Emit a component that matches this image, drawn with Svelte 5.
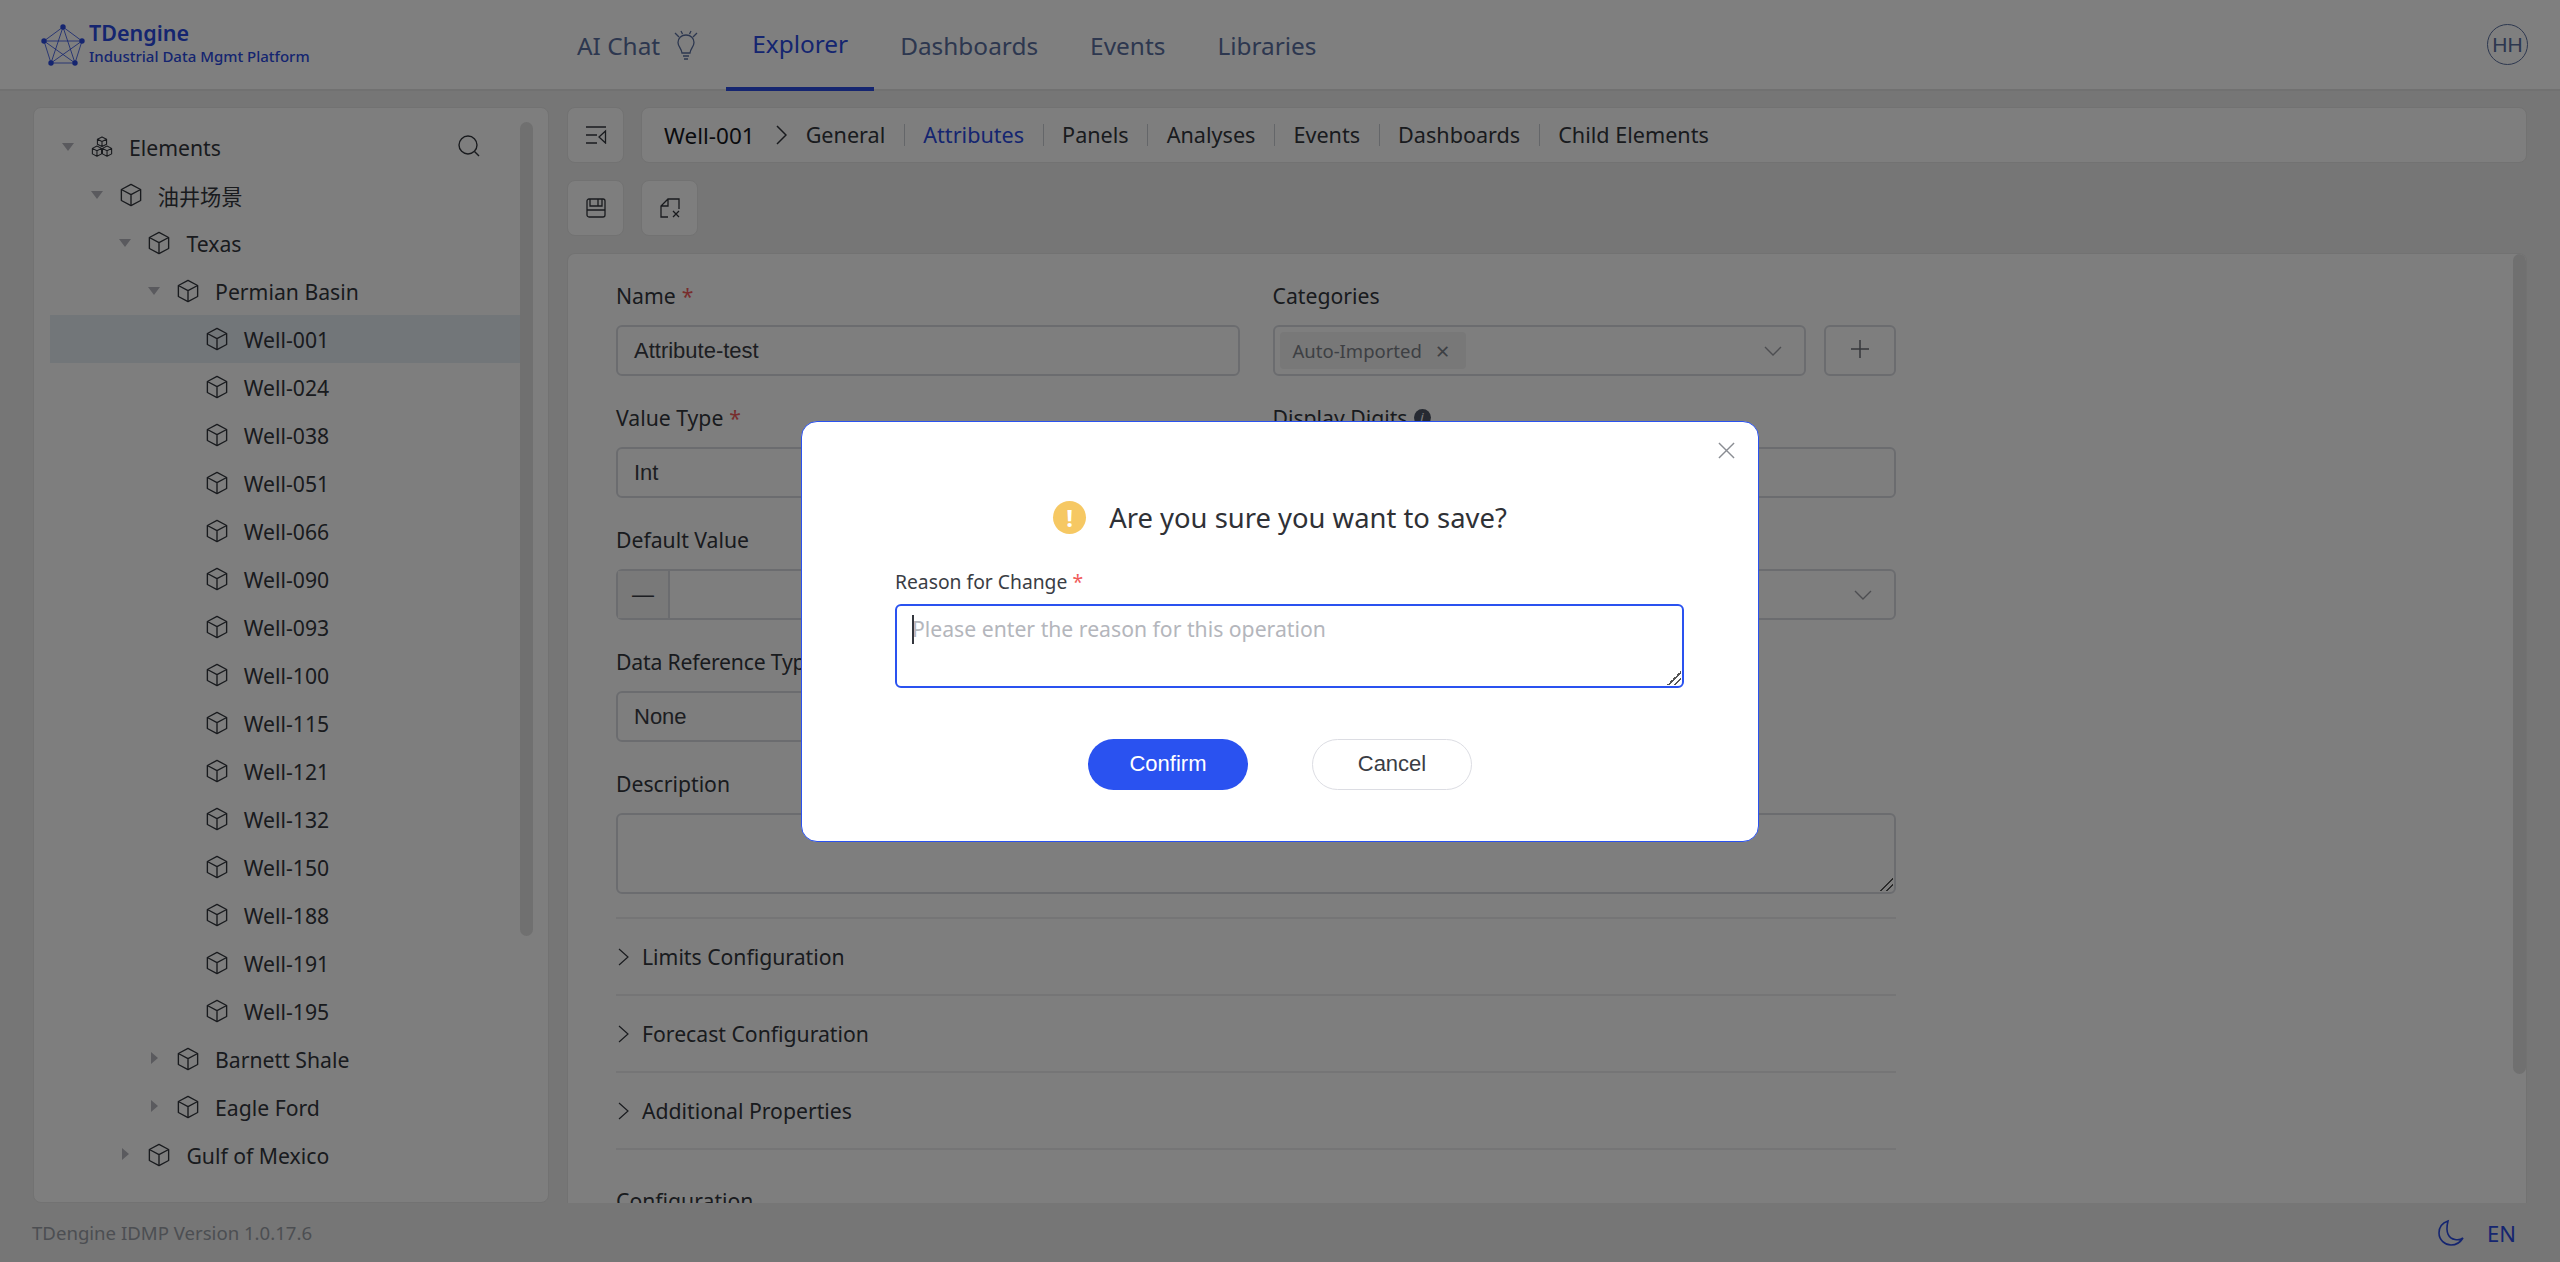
<script>
  const navItems = [
    { label: "AI Chat", bulb: true },
    { label: "Explorer", active: true },
    { label: "Dashboards" },
    { label: "Events" },
    { label: "Libraries" },
  ];

  const tabs = ["General", "Attributes", "Panels", "Analyses", "Events", "Dashboards", "Child Elements"];

  const wells = ["001", "024", "038", "051", "066", "090", "093", "100", "115", "121", "132", "150", "188", "191", "195"];

  const tree = [
    { name: "油井场景", level: 1, caret: "down" },
    { name: "Texas", level: 2, caret: "down" },
    { name: "Permian Basin", level: 3, caret: "down" },
    ...wells.map((w) => ({ name: `Well-${w}`, level: 4, selected: w === "001" })),
    { name: "Barnett Shale", level: 3, caret: "right" },
    { name: "Eagle Ford", level: 3, caret: "right" },
    { name: "Gulf of Mexico", level: 2, caret: "right" },
  ];

  const sections = ["Limits Configuration", "Forecast Configuration", "Additional Properties"];
</script>

{#snippet cube()}
  <svg class="cube" viewBox="0 0 24 26" fill="none" stroke="currentColor" stroke-width="1.5" stroke-linejoin="round">
    <path d="M12 1.5 22.5 7v12L12 24.5 1.5 19V7z" />
    <path d="M1.5 7 12 12.5 22.5 7M12 12.5v12" />
  </svg>
{/snippet}

{#snippet chevDown()}
  <svg class="chev" viewBox="0 0 18 10" fill="none" stroke="currentColor" stroke-width="1.4"><path d="M1 1l8 8 8-8" /></svg>
{/snippet}

<div class="page">
  <header>
    <div class="logo">
      <svg width="46" height="44" viewBox="0 0 46 44" fill="none" stroke="#2a4ae0" stroke-width="0.8">
        <path d="M23 4 42 18 35 40H11L4 18z" />
        <path d="M23 4 35 40 4 18H42L11 40z" />
        <g fill="#2a4ae0" stroke="none">
          <circle cx="23" cy="4" r="2.7" /><circle cx="42" cy="18" r="2.7" /><circle cx="35" cy="40" r="2.7" />
          <circle cx="11" cy="40" r="2.7" /><circle cx="4" cy="18" r="2.7" />
        </g>
      </svg>
      <div class="logo-text">
        <span class="brand">TDengine</span>
        <span class="sub">Industrial Data Mgmt Platform</span>
      </div>
    </div>
    <nav>
      {#each navItems as item}
        <a class:active={item.active} class:bulb={item.bulb}>
          {item.label}
          {#if item.bulb}
            <svg width="28" height="32" viewBox="0 0 28 32" fill="none" stroke="currentColor" stroke-width="1.3">
              <path d="M14 5c-5 0-8 3.500-8 7.500 0 4 3.500 6 4 10.500h8c.5-4.500 4-6.500 4-10.500C22 8.500 19 5 14 5z" />
              <path d="M11 26h6M12 29h4M3 3l4 4M25 3l-4 4M9 1l1.500 3M19 1l-1.500 3" />
            </svg>
          {/if}
        </a>
      {/each}
    </nav>
    <div class="avatar">HH</div>
  </header>

  <div class="body">
    <aside class="panel">
      <div class="tree-row root">
        <span class="caret down"></span>
        <svg class="cube" viewBox="0 0 24 24" fill="none" stroke="currentColor" stroke-width="1.2" stroke-linejoin="round">
          <path d="M12 1 17 3.500V9L12 11.500 7 9V3.500zM7 3.500l5 2.500 5-2.500M12 6v5.500" />
          <path d="M6.500 11 11.500 13.500V19.500L6.500 22 1.500 19.500V13.500zM1.500 13.500l5 2.500 5-2.500M6.500 16v6" />
          <path d="M17.500 11 22.500 13.500V19.500L17.500 22 12.500 19.500V13.500zM12.500 13.500l5 2.500 5-2.500M17.500 16v6" />
        </svg>
        <span class="tree-label">Elements</span>
        <svg class="search" width="24" height="24" viewBox="0 0 24 24" fill="none" stroke="currentColor" stroke-width="1.4">
          <circle cx="11" cy="11" r="9" /><path d="M17.500 17.500 22 22" />
        </svg>
      </div>
      {#each tree as node}
        <div class="tree-row" class:selected={node.selected} style="padding-left: {node.level * 28.7}px">
          {#if node.caret}
            <span class="caret {node.caret}"></span>
          {:else}
            <span class="caret none"></span>
          {/if}
          {@render cube()}
          <span class="tree-label">{node.name}</span>
        </div>
      {/each}
      <div class="thumb side"></div>
    </aside>

    <section class="content">
      <div class="topline">
        <button class="square">
          <svg width="22" height="18" viewBox="0 0 22 18" fill="none" stroke="currentColor" stroke-width="1.3">
            <path d="M1 1h20M1 9h11M1 17h11M20.500 5 14 11l6.500 6z" />
          </svg>
        </button>
        <div class="crumbs">
          <span class="well">Well-001</span>
          <svg class="crumb-chev" width="11" height="20" viewBox="0 0 11 20" fill="none" stroke="currentColor" stroke-width="1.5"><path d="M1 1l9 9-9 9" /></svg>
          {#each tabs as tab, i}
            <span class="tab" class:current={tab === "Attributes"} class:last={i === tabs.length - 1}>{tab}</span>
          {/each}
        </div>
      </div>
      <div class="actions">
        <button class="square">
          <svg width="20" height="20" viewBox="0 0 20 20" fill="none" stroke="currentColor" stroke-width="1.3">
            <rect x="1" y="1" width="18" height="18" rx="2" /><path d="M4 1v7h12V1M1 12h18M12 1v7" />
          </svg>
        </button>
        <button class="square">
          <svg width="20" height="20" viewBox="0 0 20 20" fill="none" stroke="currentColor" stroke-width="1.3">
            <path d="M8 19H1V8l7-7h11v10M1 8h7V1M13 13l6 6M19 13l-6 6" />
          </svg>
        </button>
      </div>

      <div class="form-panel">
        <div class="form">
          <div class="grid">
            <div class="field">
              <label>Name <i>*</i></label>
              <div class="input">Attribute-test</div>
            </div>
            <div class="field">
              <label>Categories</label>
              <div class="with-add">
                <div class="input select">
                  <span class="tag">Auto-Imported <b>×</b></span>
                  {@render chevDown()}
                </div>
                <button class="add">
                  <svg width="18" height="18" viewBox="0 0 18 18" stroke="currentColor" stroke-width="1.5"><path d="M9 0v18M0 9h18" /></svg>
                </button>
              </div>
            </div>
            <div class="field">
              <label>Value Type <i>*</i></label>
              <div class="input select">Int {@render chevDown()}</div>
            </div>
            <div class="field">
              <label>Display Digits <span class="info">i</span></label>
              <div class="input"></div>
            </div>
            <div class="field">
              <label>Default Value</label>
              <div class="input split"><span class="minus">—</span></div>
            </div>
            <div class="field">
              <label></label>
              <div class="input select">{@render chevDown()}</div>
            </div>
            <div class="field wide">
              <label class="tight">Data Reference Type</label>
              <div class="half"><div class="input select">None {@render chevDown()}</div></div>
            </div>
            <div class="field wide">
              <label>Description</label>
              <div class="input area"><span class="grip small"></span></div>
            </div>
          </div>
          {#each sections as s}
            <div class="section">
              <svg width="11" height="20" viewBox="0 0 11 20" fill="none" stroke="currentColor" stroke-width="1.2"><path d="M1 2l9 8-9 8" /></svg>
              {s}
            </div>
          {/each}
          <div class="config">Configuration</div>
        </div>
        <div class="thumb main"></div>
      </div>
    </section>
  </div>

  <footer>
    <span class="version">TDengine IDMP Version 1.0.17.6</span>
    <div class="foot-right">
      <svg width="28" height="28" viewBox="0 0 28 28" fill="none" stroke="#2a4ae0" stroke-width="1.6">
        <path d="M11 2C5 4 2 9 2 14c0 7 6 12 12 12 5 0 9-2 12-7-2 1.500-5 2-8 1.500C12 19.500 8 14 11 2z" />
      </svg>
      <span class="lang">EN</span>
    </div>
  </footer>

  <div class="overlay">
    <div class="modal">
      <svg class="close" width="17" height="17" viewBox="0 0 18 18" fill="none" stroke="currentColor" stroke-width="1.5"><path d="M1 1l16 16M17 1 1 17" /></svg>
      <div class="title">
        <span class="warn">!</span>
        Are you sure you want to save?
      </div>
      <div class="reason">
        <div class="reason-label">Reason for Change <i>*</i></div>
        <div class="reason-box">
          <span class="cursor"></span>
          <span class="placeholder">Please enter the reason for this operation</span>
          <span class="grip"></span>
        </div>
      </div>
      <div class="buttons">
        <button class="confirm">Confirm</button>
        <button class="cancel">Cancel</button>
      </div>
    </div>
  </div>
</div>

<style>
  :global(body) {
    margin: 0;
    font-family: "Noto Sans", "Noto Sans CJK SC", sans-serif;
    color: #33363d;
  }
  button {
    font-family: inherit;
    color: inherit;
  }
  .page {
    width: 2560px;
    height: 1262px;
    display: flex;
    flex-direction: column;
    background: #ececec;
    overflow: hidden;
    position: relative;
  }

  header {
    height: 89px;
    flex: none;
    display: flex;
    align-items: center;
    background: #fff;
    border-bottom: 2px solid #e2e2e2;
    box-sizing: content-box;
    padding: 0 32px 0 40px;
  }
  .logo {
    display: flex;
    align-items: center;
    gap: 3px;
    width: 537px;
    flex: none;
  }
  .logo-text {
    display: flex;
    flex-direction: column;
    color: #2a4ae0;
  }
  .brand {
    font-size: 21.5px;
    font-weight: 600;
    line-height: 24px;
    margin-top: -2px;
  }
  .sub {
    font-size: 15px;
    font-weight: 500;
    line-height: 22px;
  }
  nav {
    display: flex;
    height: 89px;
    flex: 1;
  }
  nav a {
    display: flex;
    align-items: center;
    gap: 12px;
    padding: 0 26px;
    font-size: 24.4px;
    color: #5a6f9f;
    box-sizing: border-box;
    height: 91px;
  }
  nav a.bulb {
    padding: 0 26px 0 0;
  }
  nav a.active {
    color: #2a4ae0;
    border-bottom: 4px solid #2a4ae0;
  }
  .avatar {
    width: 41px;
    height: 41px;
    border: 1px solid #5a6f9f;
    border-radius: 50%;
    box-sizing: border-box;
    display: flex;
    align-items: center;
    justify-content: center;
    font-family: "Liberation Sans", sans-serif;
    font-size: 21px;
    color: #5a6f9f;
  }

  .body {
    flex: 1;
    display: flex;
    gap: 18px;
    padding: 16px 33px 0;
    min-height: 0;
  }
  .panel {
    width: 516px;
    flex: none;
    background: #fdfdfd;
    border: 1px solid #e4e4e4;
    border-radius: 8px;
    box-sizing: border-box;
    padding: 15px 16px 0;
    position: relative;
    overflow: hidden;
  }
  .tree-row {
    height: 48px;
    display: flex;
    align-items: center;
    font-size: 21.2px;
    box-sizing: border-box;
    width: 472px;
  }
  .tree-row.root {
    padding-left: 0;
  }
  .tree-row.selected {
    background: #e5ecf3;
  }
  .caret {
    width: 41px;
    flex: none;
    position: relative;
    height: 14px;
  }
  .caret.down::before {
    content: "";
    position: absolute;
    left: 12px;
    top: 3px;
    border-left: 6px solid transparent;
    border-right: 6px solid transparent;
    border-top: 8px solid #b4b4bc;
  }
  .caret.right::before {
    content: "";
    position: absolute;
    left: 15px;
    top: 0;
    border-top: 6.500px solid transparent;
    border-bottom: 6.500px solid transparent;
    border-left: 7px solid #b4b4bc;
  }
  .cube {
    width: 22px;
    height: 24px;
    flex: none;
    margin: 0 16px 0 0;
  }
  .search {
    margin-left: auto;
    margin-right: 41px;
    margin-top: -2px;
  }
  .thumb {
    position: absolute;
    background: #e0e0e0;
    border-radius: 7px;
    width: 13px;
  }
  .thumb.side {
    right: 15px;
    top: 14px;
    height: 814px;
  }

  .content {
    flex: 1;
    min-width: 0;
    display: flex;
    flex-direction: column;
  }
  .topline {
    display: flex;
    gap: 17px;
    height: 56px;
  }
  .actions {
    display: flex;
    gap: 17px;
    height: 56px;
    margin: 17px 0;
  }
  .square {
    width: 57px;
    height: 56px;
    background: #fdfdfd;
    border: 1px solid #e4e4e4;
    border-radius: 8px;
    padding: 0;
    display: flex;
    align-items: center;
    justify-content: center;
    box-sizing: border-box;
  }
  .crumbs {
    flex: 1;
    background: #fdfdfd;
    border: 1px solid #e4e4e4;
    border-radius: 8px;
    display: flex;
    align-items: center;
    padding-left: 22px;
    font-size: 21.6px;
  }
  .well {
    color: #14161c;
    font-size: 22.5px;
  }
  .crumb-chev {
    margin: 0 19px 0 21px;
  }
  .tab {
    padding: 0 18.5px 0 0;
    margin-right: 18.5px;
    border-right: 1px solid #c9ccd3;
    line-height: 22px;
  }
  .tab.last {
    border: 0;
  }
  .tab.current {
    color: #2a4ae0;
  }

  .form-panel {
    flex: 1;
    background: #fdfdfd;
    border: 1px solid #e4e4e4;
    border-bottom: 0;
    border-radius: 8px 8px 0 0;
    position: relative;
    overflow: hidden;
    min-height: 0;
    box-sizing: border-box;
  }
  .thumb.main {
    right: 0;
    top: 0;
    height: 820px;
  }
  .form {
    width: 1280px;
    margin-left: 48px;
    padding-top: 24px;
    font-size: 21.2px;
  }
  .grid {
    display: grid;
    grid-template-columns: 1fr 1fr;
    column-gap: 33px;
  }
  .field {
    height: 122px;
  }
  .field.wide {
    grid-column: span 2;
  }
  .field.wide:last-child {
    height: 151px;
  }
  .half {
    width: 623px;
  }
  label {
    display: flex;
    align-items: center;
    gap: 6px;
    height: 34px;
    margin-bottom: 13px;
  }
  label.tight {
    letter-spacing: -0.2px;
  }
  i {
    color: #f05a5a;
    font-style: normal;
  }
  .info {
    width: 17px;
    height: 17px;
    border-radius: 50%;
    background: #4c5564;
    color: #fff;
    font-size: 13px;
    font-style: italic;
    display: inline-flex;
    align-items: center;
    justify-content: center;
  }
  .input {
    height: 51px;
    border: 2px solid #d6d8de;
    border-radius: 6px;
    box-sizing: border-box;
    padding: 0 16px;
    display: flex;
    align-items: center;
    font-family: "Liberation Sans", sans-serif;
    font-size: 22px;
    color: #3a3d44;
    flex: 1;
    position: relative;
  }
  .input.area {
    height: 81px;
  }
  .input.split {
    padding: 0;
  }
  .minus {
    width: 50px;
    height: 100%;
    background: #f2f2f2;
    border-right: 2px solid #d6d8de;
    display: flex;
    align-items: center;
    justify-content: center;
  }
  .select {
    justify-content: space-between;
  }
  .chev {
    width: 18px;
    height: 10px;
    color: #9a9ca3;
    margin-left: auto;
    margin-right: 6px;
  }
  .tag {
    background: #f0f0f0;
    border-radius: 4px;
    height: 37px;
    padding: 0 16px 0 13px;
    margin-left: -11px;
    display: flex;
    align-items: center;
    gap: 14px;
    font-family: "Noto Sans", sans-serif;
    font-size: 18.5px;
    color: #7b7f87;
  }
  .tag b {
    font-weight: 400;
    font-size: 24px;
    line-height: 20px;
  }
  .with-add {
    display: flex;
    gap: 18px;
  }
  .add {
    width: 72px;
    height: 51px;
    background: transparent;
    border: 2px solid #d6d8de;
    border-radius: 6px;
    color: #6b6e75;
    padding: 0;
  }
  .section {
    border-top: 2px solid #ebebed;
    height: 75px;
    display: flex;
    align-items: center;
    gap: 13px;
    padding-left: 2px;
  }
  .config {
    border-top: 2px solid #ebebed;
    padding-top: 36px;
  }

  footer {
    height: 59px;
    flex: none;
    display: flex;
    align-items: center;
    justify-content: space-between;
    padding: 0 44px 0 32px;
  }
  .version {
    font-size: 18.6px;
    color: #989da5;
  }
  .foot-right {
    display: flex;
    align-items: center;
    gap: 22px;
  }
  .lang {
    font-size: 22px;
    color: #2a4ae0;
  }

  .overlay {
    position: absolute;
    inset: 0;
    background: rgba(0, 0, 0, 0.5);
    display: flex;
    align-items: center;
    justify-content: center;
  }
  .modal {
    width: 958px;
    height: 421px;
    background: #fff;
    border: 1px solid #2a52f0;
    border-radius: 16px;
    box-sizing: border-box;
    position: relative;
    padding-top: 76px;
  }
  .close {
    position: absolute;
    right: 23px;
    top: 20px;
    color: #8a8d93;
  }
  .title {
    display: flex;
    align-items: center;
    justify-content: center;
    gap: 23px;
    font-size: 27.4px;
    height: 40px;
    color: #2f3136;
  }
  .warn {
    width: 33px;
    height: 33px;
    border-radius: 50%;
    background: #f6c863;
    color: #fff;
    font-size: 24px;
    font-weight: 700;
    display: flex;
    align-items: center;
    justify-content: center;
  }
  .reason {
    margin: 29px 74px 0 93px;
  }
  .reason-label {
    font-size: 19.3px;
    height: 30px;
    line-height: 30px;
    margin-bottom: 7px;
    color: #3a3d44;
  }
  .reason-box {
    height: 84px;
    border: 2px solid #2a52f0;
    border-radius: 6px;
    box-sizing: border-box;
    position: relative;
    padding: 7px 15px;
    font-size: 21.2px;
    line-height: 32px;
  }
  .placeholder {
    color: #b4b6bc;
  }
  .cursor {
    position: absolute;
    left: 15px;
    top: 9px;
    width: 2px;
    height: 29px;
    background: #33363d;
  }
  .grip {
    position: absolute;
    right: 1px;
    bottom: 1px;
    width: 14px;
    height: 14px;
    background: linear-gradient(135deg, transparent 50%, #555 50%, #555 58%, transparent 58%, transparent 72%, #555 72%, #555 80%, transparent 80%);
  }
  .buttons {
    display: flex;
    justify-content: center;
    gap: 64px;
    margin-top: 51px;
  }
  .buttons button {
    width: 160px;
    height: 51px;
    border-radius: 26px;
    font-family: "Liberation Sans", sans-serif;
    font-size: 22px;
    padding: 0;
  }
  .confirm {
    background: #2a52f0;
    border: 0;
    color: #fff;
  }
  .cancel {
    background: #fff;
    border: 1px solid #dcdde3;
    color: #3a3d44;
  }
</style>
